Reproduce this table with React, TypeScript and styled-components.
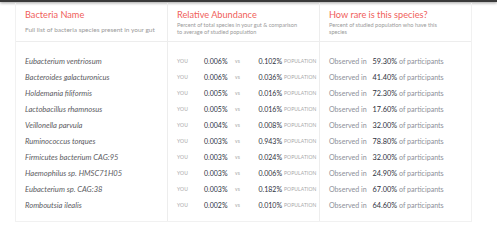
import styled, { createGlobalStyle } from "styled-components";

const GlobalStyle = createGlobalStyle`
  html, body {
    margin: 0;
    padding: 0;
    background: #ffffff;
    font-family: Lato, "Noto Sans", sans-serif;
  }
`;

const TopBar = styled.div`
  height: 2px;
  background: #3a3a3a;
  box-shadow: 0 1px 3px rgba(0, 0, 0, 0.45);
`;

const Page = styled.div`
  padding: 1px 25px 0 15px;
`;

const Table = styled.div`
  border: 1px solid #f1f1f1;
  border-top: none;
  display: grid;
  grid-template-columns: 152px 152px 1fr;
`;

const HeadCell = styled.div<{ $last?: boolean }>`
  padding: 6px 9px 0 9px;
  height: 39px;
  box-sizing: border-box;
  border-bottom: 1px solid #ededed;
  border-right: ${(p) => (p.$last ? "none" : "1px solid #ededed")};
`;

const Title = styled.div`
  color: #f0605a;
  font-size: 9.2px;
  line-height: 12px;
`;

const Sub = styled.div<{ $gap?: number; $size?: number }>`
  color: #9a9a9a;
  font-size: ${(p) => p.$size ?? 5.6}px;
  line-height: 7px;
  margin-top: ${(p) => p.$gap ?? 0}px;
`;

const BodyCol = styled.div<{ $last?: boolean }>`
  padding: 11px 9px 8px 9px;
  border-right: ${(p) => (p.$last ? "none" : "1px solid #ededed")};
`;

const Row = styled.div`
  height: 16px;
  display: flex;
  align-items: center;
`;

const Species = styled.span`
  font-style: italic;
  font-size: 7.6px;
  color: #5c5c5f;
`;

const AbundRow = styled(Row)`
  display: grid;
  grid-template-columns: 27px 31px 13px 36px auto;
`;

const Tiny = styled.span`
  font-size: 5px;
  color: #a8a8a8;
  letter-spacing: 0.1px;
`;

const Value = styled.span<{ $right?: boolean }>`
  font-size: 7px;
  color: #2e3240;
  text-align: ${(p) => (p.$right ? "right" : "left")};
  padding-right: ${(p) => (p.$right ? "2px" : "0")};
`;

const RareRow = styled(Row)`
  display: grid;
  grid-template-columns: 42px 28px auto;
`;

const RareValue = styled(Value)`
  font-size: 7.3px;
`;

const Gray = styled.span`
  font-size: 7.1px;
  color: #8d9099;
`;

const rows = [
  ["Eubacterium ventriosum", "0.006%", "0.102%", "59.30%"],
  ["Bacteroides galacturonicus", "0.006%", "0.036%", "41.40%"],
  ["Holdemania filiformis", "0.005%", "0.016%", "72.30%"],
  ["Lactobacillus rhamnosus", "0.005%", "0.016%", "17.60%"],
  ["Veillonella parvula", "0.004%", "0.008%", "32.00%"],
  ["Ruminococcus torques", "0.003%", "0.943%", "78.80%"],
  ["Firmicutes bacterium CAG:95", "0.003%", "0.024%", "32.00%"],
  ["Haemophilus sp. HMSC71H05", "0.003%", "0.006%", "24.90%"],
  ["Eubacterium sp. CAG:38", "0.003%", "0.182%", "67.00%"],
  ["Romboutsia ilealis", "0.002%", "0.010%", "64.60%"],
];

export default function App() {
  return (
    <>
      <GlobalStyle />
      <TopBar />
      <Page>
        <Table>
          <HeadCell>
            <Title>Bacteria Name</Title>
            <Sub $gap={5} $size={6.5}>
              Full list of bacteria species present in your gut
            </Sub>
          </HeadCell>
          <HeadCell>
            <Title>Relative Abundance</Title>
            <Sub>Percent of total species in your gut &amp; comparison</Sub>
            <Sub>to average of studied population</Sub>
          </HeadCell>
          <HeadCell $last>
            <Title>How rare is this species?</Title>
            <Sub>Percent of studied population who have this</Sub>
            <Sub>species</Sub>
          </HeadCell>

          <BodyCol>
            {rows.map((r) => (
              <Row key={r[0]}>
                <Species>{r[0]}</Species>
              </Row>
            ))}
          </BodyCol>
          <BodyCol>
            {rows.map((r) => (
              <AbundRow key={r[0]}>
                <Tiny>YOU</Tiny>
                <Value>{r[1]}</Value>
                <Tiny>vs</Tiny>
                <Value $right>{r[2]}</Value>
                <Tiny>POPULATION</Tiny>
              </AbundRow>
            ))}
          </BodyCol>
          <BodyCol $last>
            {rows.map((r) => (
              <RareRow key={r[0]}>
                <Gray>Observed in</Gray>
                <RareValue $right>{r[3]}</RareValue>
                <Gray>of participants</Gray>
              </RareRow>
            ))}
          </BodyCol>
        </Table>
      </Page>
    </>
  );
}
